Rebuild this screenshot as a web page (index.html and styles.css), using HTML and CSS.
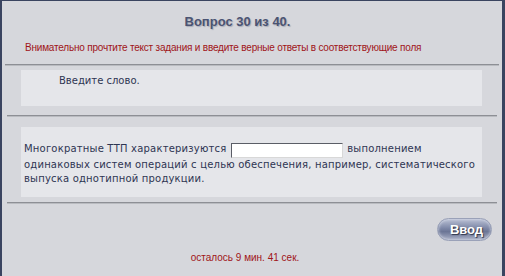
FILE: index.html
```html
<!DOCTYPE html>
<html>
<head>
<meta charset="utf-8">
<link rel="stylesheet" href="styles.css">
</head>
<body>
<div class="frame">
  <div class="title">Вопрос 30 из 40.</div>
  <div class="hint">Внимательно прочтите текст задания и введите верные ответы в соответствующие поля</div>
  <div class="rule rule-wide"></div>
  <div class="box box-task">Введите слово.</div>
  <div class="rule"></div>
  <div class="box box-question">Многократные ТТП характеризуются <input class="answer" type="text"> выполнением одинаковых систем операций с целью обеспечения, например, систематического выпуска однотипной продукции.</div>
  <div class="rule"></div>
  <div class="actions"><button class="btn">Ввод</button></div>
  <div class="timer">осталось 9 мин. 41 сек.</div>
</div>
</body>
</html>
```
FILE: styles.css
```css
html, body {
  margin: 0;
  padding: 0;
  background: #d6d7dc;
}
.frame {
  width: 505px;
  height: 276px;
  box-sizing: border-box;
  border-top: 1px solid #3a4460;
  border-left: 2px solid #3a4460;
  border-right: 3px solid #3a4460;
  background: #d6d7dc;
  display: flex;
  flex-direction: column;
  font-family: "Liberation Sans", Arial, sans-serif;
}
.title {
  margin-top: 13px;
  height: 16px;
  line-height: 16px;
  text-align: center;
  font-size: 13px;
  font-weight: bold;
  color: #4b5372;
  text-shadow: 1px 1px 1px #a8abb6;
  padding-right: 29px;
}
.hint {
  margin-top: 12px;
  margin-left: 23px;
  height: 12px;
  line-height: 12px;
  font-size: 10px;
  letter-spacing: -0.2px;
  color: #a01418;
}
.rule {
  height: 1px;
  border-bottom: 1px solid #b9bbc0;
  background: #8d8f95;
  margin: 0 5px 0 5px;
}
.rule-wide {
  margin: 10px 3px 0 3px;
}
.box {
  background: #e5e6ea;
  font-family: "DejaVu Sans", Verdana, sans-serif;
  font-size: 10px;
  color: #2e3552;
  margin: 0 20px 0 19px;
}
.box-task {
  margin-top: 4px;
  margin-bottom: 9px;
  height: 36px;
  box-sizing: border-box;
  padding: 5px 0 0 38px;
  line-height: 12px;
}
.box-question {
  margin-top: 10px;
  margin-bottom: 5px;
  height: 70px;
  box-sizing: border-box;
  padding: 15px 4px 0 3px;
  line-height: 14px;
  letter-spacing: 0.2px;
}
.answer {
  width: 112px;
  height: 15px;
  box-sizing: border-box;
  padding: 0;
  margin: 0 1px;
  border: 1px solid;
  border-color: #5a5d66 #d8d8d8 #d8d8d8 #5a5d66;
  background: #fff;
  vertical-align: -3px;
}
.actions {
  display: flex;
  justify-content: flex-end;
  margin-top: 14px;
  padding-right: 10px;
}
.btn {
  width: 55px;
  height: 23px;
  border-radius: 12px;
  border: 1px solid #9aa1b8;
  background: linear-gradient(#b9c0d4 0%, #7c86a6 45%, #6b7595 60%, #a9b0c6 100%);
  box-shadow: inset 0 0 3px #dfe3ee;
  color: #fff;
  font-family: "Liberation Sans", Arial, sans-serif;
  font-size: 13px;
  font-weight: bold;
  text-shadow: 1px 1px 1px #2c3348;
  padding: 0 0 1px 4px;
  cursor: pointer;
}
.timer {
  margin-top: 11px;
  text-align: center;
  font-size: 10px;
  line-height: 12px;
  color: #a01418;
  padding-right: 14px;
}
```
